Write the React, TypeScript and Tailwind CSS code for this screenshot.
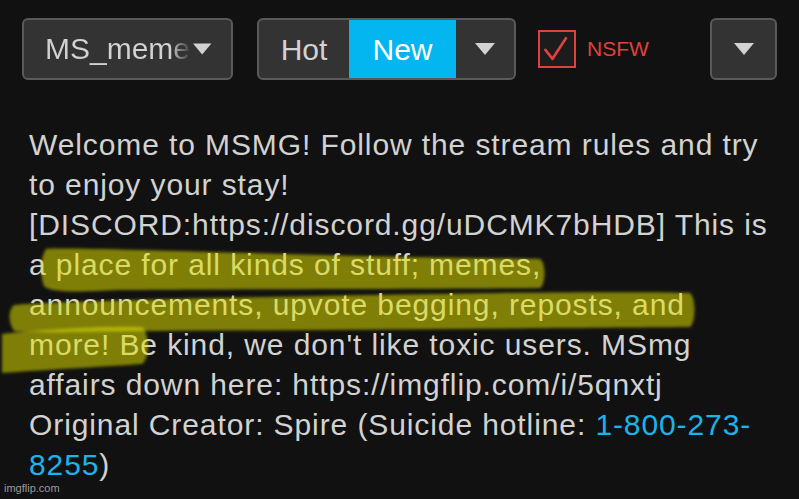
import React from "react";

function Caret({ className = "" }: { className?: string }) {
  return (
    <svg viewBox="0 0 20 12" className={className}>
      <path d="M0 0 L20 0 L10 12 Z" fill="#d2d2d2" />
    </svg>
  );
}

// highlighter strokes drawn over the text
function Highlights() {
  return (
    <svg
      className="absolute inset-0 pointer-events-none"
      width="799"
      height="499"
      viewBox="0 0 799 499"
    >
      <defs>
        <filter id="soft" x="-5%" y="-30%" width="110%" height="160%">
          <feGaussianBlur stdDeviation="1.4" />
        </filter>
      </defs>
      <g fill="rgb(228,228,0)" fillOpacity="0.52" filter="url(#soft)">
        <path d="M46 249 C 60 247, 200 252, 360 256 C 440 258, 510 258, 540 259 C 546 262, 546 284, 540 288 C 420 289, 250 289, 120 290 C 80 292, 50 293, 44 286 C 40 276, 40 258, 46 249 Z" />
        <path d="M14 305 C 80 300, 300 296, 500 293 C 600 292, 665 292, 690 293 C 696 298, 696 322, 690 327 C 560 328, 350 330, 150 331 C 80 332, 30 333, 14 331 C 8 322, 8 310, 14 305 Z" />
        <path d="M2 334 C 40 330, 100 326, 142 327 C 150 334, 150 358, 142 364 C 100 367, 40 370, 2 373 Z" />
      </g>
    </svg>
  );
}

const lines: React.ReactNode[] = [
  "Welcome to MSMG! Follow the stream rules and try",
  "to enjoy your stay!",
  "[DISCORD:https://discord.gg/uDCMK7bHDB] This is",
  "a place for all kinds of stuff; memes,",
  "announcements, upvote begging, reposts, and",
  "more! Be kind, we don't like toxic users. MSmg",
  "affairs down here: https://imgflip.com/i/5qnxtj",
  <>
    Original Creator: Spire (Suicide hotline:{" "}
    <span className="text-[#1bb3ea]">1-800-273-</span>
  </>,
  <>
    <span className="text-[#1bb3ea]">8255</span>)
  </>,
];

export default function App() {
  const font = { fontFamily: '"Liberation Sans", Arial, sans-serif' };

  return (
    <div
      className="relative w-[799px] h-[499px] overflow-hidden bg-[#111111]"
      style={font}
    >
      {/* toolbar */}
      <div className="flex items-center pt-[18px] pl-[22px]">
        <div className="flex items-center w-[211px] h-[62px] rounded-[6px] border-2 border-[#5a5a5a] bg-[#333333] pl-[21px] pr-[20px]">
          <span className="w-[152px] overflow-hidden whitespace-nowrap text-[30px] leading-[36px] text-transparent bg-clip-text bg-linear-to-r from-[#d2d2d2] from-85% to-[#333333]">
            MS_meme
          </span>
          <Caret className="w-[19px] h-[12px] ml-px" />
        </div>

        <div className="flex ml-[24px] w-[259px] h-[62px] rounded-[6px] border-2 border-[#5a5a5a] bg-[#333333] overflow-hidden">
          <div className="flex items-center justify-center w-[90px] text-[30px] text-[#d2d2d2]">
            Hot
          </div>
          <div className="flex items-center justify-center w-[107px] bg-[#03b6ef] text-[30px] text-white">
            New
          </div>
          <div className="flex flex-1 items-center justify-center">
            <Caret className="w-[20px] h-[12px]" />
          </div>
        </div>

        <div className="ml-[22px] flex items-center justify-center w-[38px] h-[38px] border-2 border-[#e0403e] bg-[#1c1c1c]">
          <svg viewBox="0 0 38 38" className="w-[38px] h-[38px]">
            <path
              d="M6 20 L14 30 L29 7"
              fill="none"
              stroke="#e0403e"
              strokeWidth="3"
              strokeLinecap="round"
              strokeLinejoin="round"
            />
          </svg>
        </div>
        <span className="ml-[11px] text-[21px] text-[#e0403e]">NSFW</span>

        <div className="ml-auto mr-[22px] flex items-center justify-center w-[67px] h-[62px] rounded-[6px] border-2 border-[#5a5a5a] bg-[#333333]">
          <Caret className="w-[20px] h-[12px]" />
        </div>
      </div>

      {/* description */}
      <div className="mt-[45px] pl-[29px] text-[30px] leading-[40px] tracking-[0.9px] text-[#d2d2d2]">
        {lines.map((line, i) => (
          <div key={i} className="whitespace-nowrap">
            {line}
          </div>
        ))}
      </div>

      <Highlights />

      <span className="absolute left-[4px] bottom-[3px] text-[11px] text-[#9a9a9a]">
        imgflip.com
      </span>
    </div>
  );
}
